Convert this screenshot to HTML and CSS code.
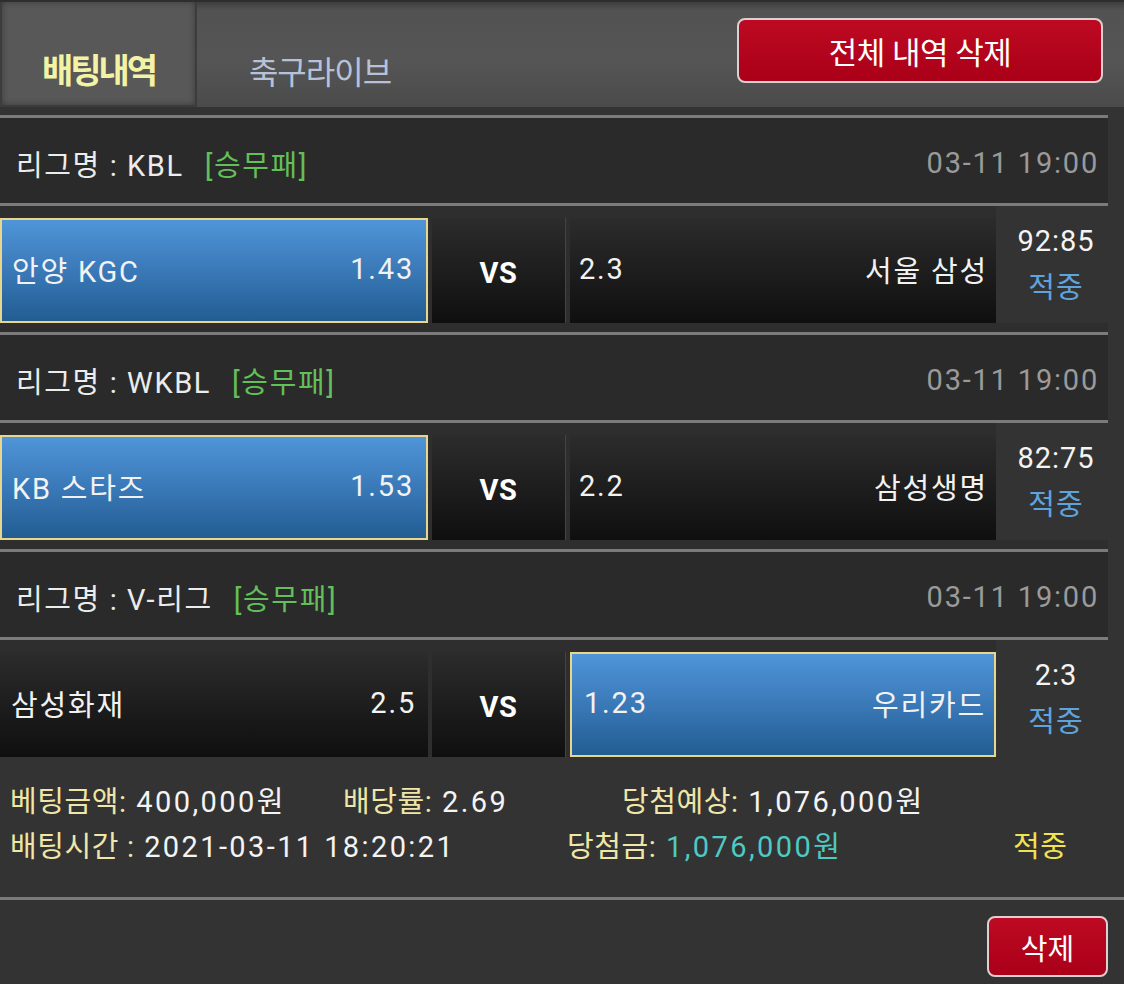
FILE: index.html
```html
<!DOCTYPE html>
<html lang="ko">
<head>
<meta charset="utf-8">
<title>배팅내역</title>
<link rel="stylesheet" href="styles.css">
</head>
<body>
<div class="page">
  <div class="header">
    <div class="tab tab-active">배팅내역</div>
    <div class="tab tab-plain">축구라이브</div>
    <button class="btn-red btn-all">전체 내역 삭제</button>
  </div>
  <div class="header-gap"></div>

  <div class="league"><span class="lname">리그명 : KBL</span><span class="ltype">[승무패]</span><span class="ldate">03-11 19:00</span></div>
  <div class="match">
    <div class="cell team sel"><span>안양 KGC</span><span>1.43</span></div>
    <div class="cell vs">VS</div>
    <div class="cell team right"><span>2.3</span><span>서울 삼성</span></div>
    <div class="score"><div class="sc">92:85</div><div class="hit">적중</div></div>
  </div>

  <div class="league"><span class="lname">리그명 : WKBL</span><span class="ltype">[승무패]</span><span class="ldate">03-11 19:00</span></div>
  <div class="match">
    <div class="cell team sel"><span>KB 스타즈</span><span>1.53</span></div>
    <div class="cell vs">VS</div>
    <div class="cell team right"><span>2.2</span><span>삼성생명</span></div>
    <div class="score"><div class="sc">82:75</div><div class="hit">적중</div></div>
  </div>

  <div class="league"><span class="lname">리그명 : V-리그</span><span class="ltype">[승무패]</span><span class="ldate">03-11 19:00</span></div>
  <div class="match last">
    <div class="cell team"><span>삼성화재</span><span>2.5</span></div>
    <div class="cell vs">VS</div>
    <div class="cell team right sel"><span>1.23</span><span>우리카드</span></div>
    <div class="score"><div class="sc">2:3</div><div class="hit">적중</div></div>
  </div>

  <div class="summary">
    <div class="srow">
      <span class="c1"><span class="lbl">베팅금액:</span> 400,000원</span>
      <span class="c2"><span class="lbl">배당률:</span> 2.69</span>
      <span><span class="lbl">당첨예상:</span> 1,076,000원</span>
    </div>
    <div class="srow">
      <span class="c3"><span class="lbl">배팅시간 :</span> 2021-03-11 18:20:21</span>
      <span class="c4"><span class="lbl">당첨금:</span> <span class="win">1,076,000원</span></span>
      <span class="result">적중</span>
    </div>
  </div>
  <div class="bottom">
    <button class="btn-red btn-del">삭제</button>
  </div>
</div>
</body>
</html>
```

FILE: styles.css
```css
* { box-sizing: border-box; }
html, body { margin: 0; padding: 0; }
body {
  background: #333333;
  font-family: Roboto, "Noto Sans CJK KR", sans-serif;
  color: #f0f0f0;
  width: 1124px;
  height: 984px;
  overflow: hidden;
}
.page { width: 1124px; }

.header {
  height: 107px;
  display: flex;
  align-items: flex-start;
  background: linear-gradient(#3e3e3e 0px, #525252 8px, #555555 60px, #4a4a4a 107px);
  border-top: 2px solid #2e2e2e;
}
.tab {
  height: 105px;
  display: flex;
  align-items: center;
  justify-content: center;
  padding-top: 30px;
}
.tab-active {
  width: 197px;
  background: #585858;
  border: 2px solid #3c3c3c;
  border-top: 0;
  box-shadow: inset 0 0 6px rgba(0,0,0,0.35);
  color: #f3f3a6;
  font-weight: bold;
  font-size: 34px;
  letter-spacing: -3px;
}
.tab-plain {
  width: 246px;
  color: #b7c2d8;
  font-size: 32px;
  letter-spacing: -1px;
}
.btn-red {
  background: linear-gradient(#bd0a22, #aa0018);
  color: #ffffff;
  border: 2px solid #dcd0d2;
  border-radius: 8px;
  font-family: Roboto, "Noto Sans CJK KR", sans-serif;
  padding: 0;
  cursor: pointer;
}
.btn-all {
  margin-left: auto;
  margin-right: 21px;
  margin-top: 16px;
  width: 366px;
  height: 65px;
  font-size: 31px;
  letter-spacing: -0.5px;
}
.header-gap { height: 8px; background: #333; }

.league {
  width: 1108px;
  height: 88px;
  background: #2a2a2a;
  border-top: 3px solid #7b7b7b;
  display: flex;
  align-items: center;
  padding: 5px 11px 0 16px;
  font-size: 29px;
  letter-spacing: 1.6px;
}
.lname { color: #ececec; }
.ltype { color: #63bf58; margin-left: 21px; }
.ldate { color: #9a9a9a; margin-left: auto; letter-spacing: 1.8px; margin-right: -2px; }

.match {
  height: 129px;
  border-top: 3px solid #7b7b7b;
  display: flex;
  align-items: flex-start;
  padding-top: 12px;
  background: linear-gradient(to right, #2e2e2e 0, #2e2e2e 1108px, #333 1108px);
  position: relative;
}
.match::after {
  content: "";
  position: absolute;
  top: -3px;
  left: 1108px;
  width: 16px;
  height: 3px;
  background: #333;
}
.match.last { height: 120px; }
.cell {
  height: 105px;
  background: linear-gradient(#2c2c2c, #0f0f0f);
  font-size: 29px;
  letter-spacing: 1.8px;
  display: flex;
  align-items: center;
}
.team {
  width: 428px;
  justify-content: space-between;
  padding: 0 12px 4px 11px;
  color: #f2f2f2;
}
.team.right {
  width: 426px;
  padding: 0 8px 4px 9px;
}
.sel {
  background: linear-gradient(#4f95d8, #3a79b8 50%, #225d92);
  border: 2px solid #e8d68c;
}
.team.sel { padding-left: 10px; }
.team.right.sel { padding-left: 12px; }
.vs {
  width: 134px;
  margin: 0 4px;
  justify-content: center;
  font-weight: bold;
  font-size: 29px;
  letter-spacing: 0.5px;
  color: #ffffff;
  padding-top: 4px;
  border-right: 1px solid #444;
}
.score {
  flex: 1;
  display: flex;
  flex-direction: column;
  align-items: center;
  justify-content: center;
  font-size: 29px;
  letter-spacing: 1px;
  background: #333;
  margin-top: -12px;
  height: 117px;
  padding-right: 8px;
}
.sc { color: #f4f4f4; line-height: 47px; }
.hit { color: #5fa3dc; line-height: 47px; }

.summary {
  height: 140px;
  padding: 19px 0 0 10px;
  font-size: 29px;
  letter-spacing: 2.4px;
  color: #f4f4f4;
  background: #333;
}
.srow { display: flex; height: 45px; align-items: center; white-space: nowrap; }
.lbl { color: #efe6a8; letter-spacing: 0.6px; }
.c1 { width: 333px; }
.c2 { width: 279px; }
.c3 { width: 557px; }
.c4 { width: 446px; }
.win { color: #4fc9c2; }
.result { color: #f2e250; letter-spacing: 0.5px; }

.bottom {
  height: 88px;
  border-top: 3px solid #7b7b7b;
  display: flex;
  justify-content: flex-end;
  padding: 16px 16px 0 0;
  background: #333;
}
.btn-del {
  width: 121px;
  height: 61px;
  font-size: 29px;
}
```
